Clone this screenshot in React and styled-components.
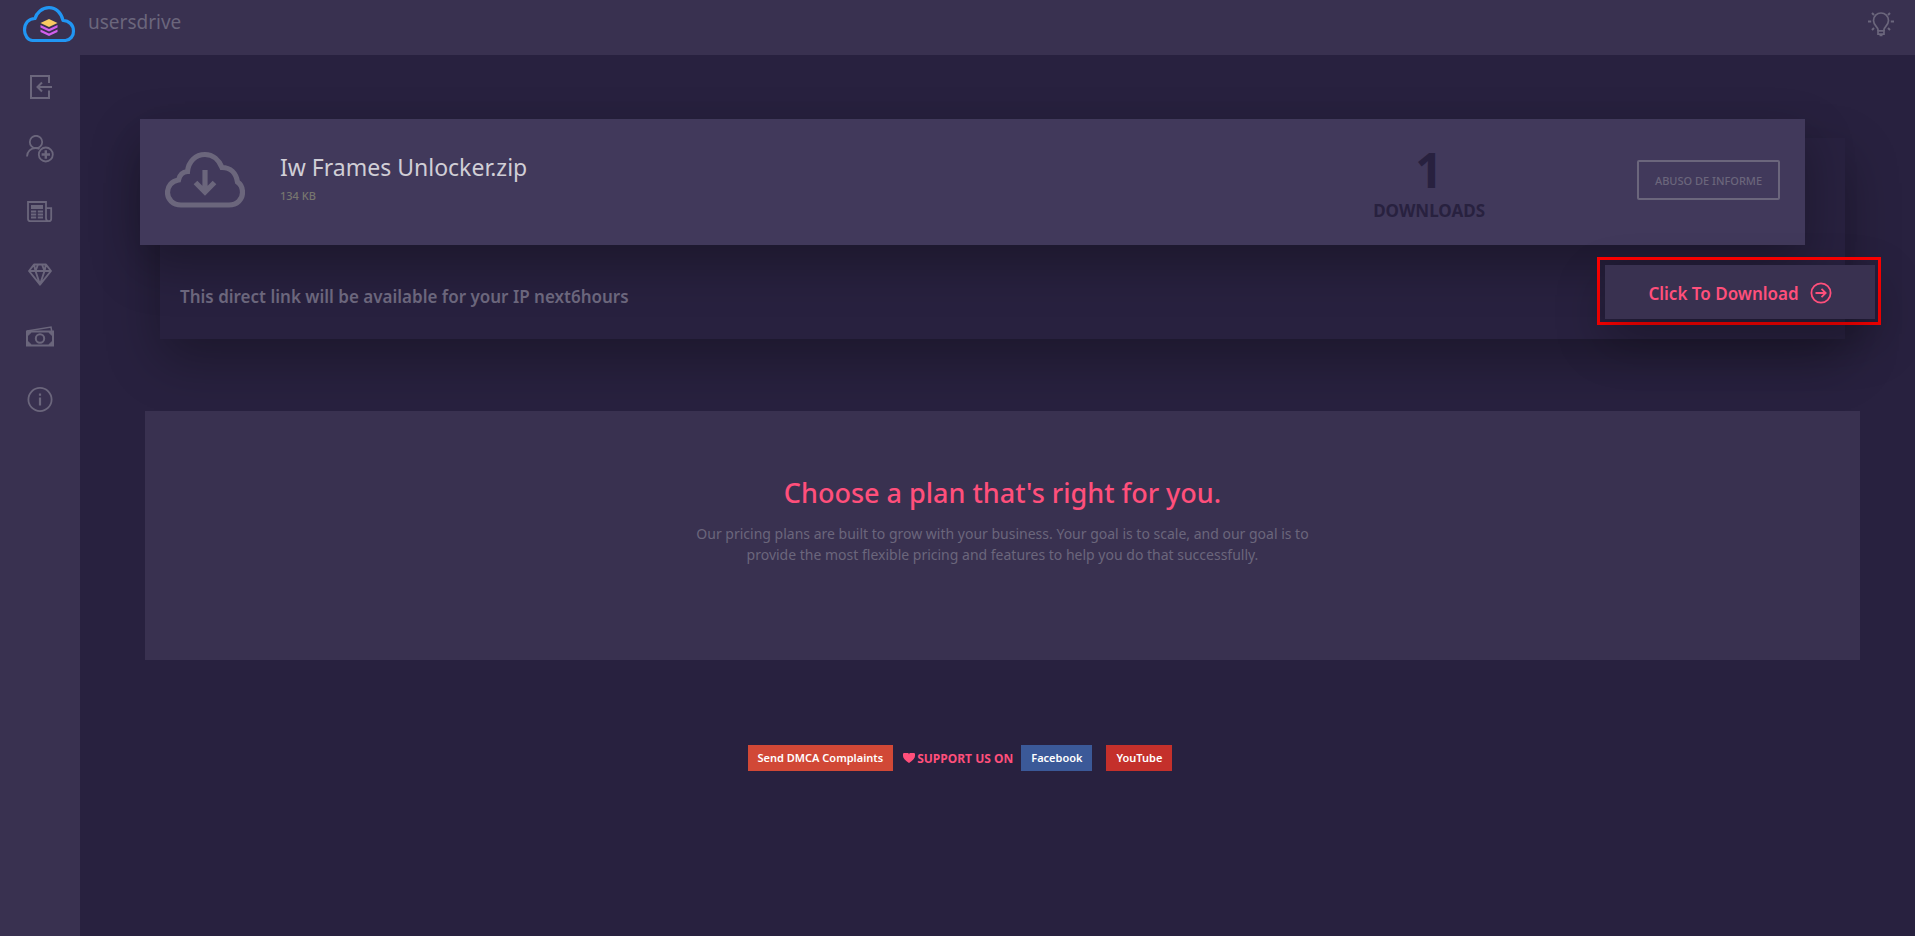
import styled, { createGlobalStyle } from "styled-components";

const menu = [
  { id: "login", label: "Login", Icon: LoginIcon },
  { id: "signup", label: "Sign up", Icon: SignUpIcon },
  { id: "news", label: "News", Icon: NewsIcon },
  { id: "premium", label: "Premium", Icon: DiamondIcon },
  { id: "money", label: "Make money", Icon: MoneyIcon },
  { id: "info", label: "Info", Icon: InfoIcon },
];

export default function App() {
  return (
    <>
      <GlobalStyle />
      <Header>
        <Brand href="#">
          <LogoIcon />
          <span>usersdrive</span>
        </Brand>
        <ThemeButton aria-label="Switch theme">
          <BulbIcon />
        </ThemeButton>
      </Header>
      <Page>
        <Sidebar>
          {menu.map(({ id, label, Icon }) => (
            <SideLink key={id} href={`#${id}`} aria-label={label}>
              <Icon />
            </SideLink>
          ))}
        </Sidebar>
        <Main>
          <DownloadBox>
            <FileCard>
              <CloudIcon />
              <FileInfo>
                <FileName>Iw Frames Unlocker.zip</FileName>
                <FileSize>134 KB</FileSize>
              </FileInfo>
              <Counter>
                <Count>1</Count>
                <CountLabel>DOWNLOADS</CountLabel>
              </Counter>
              <ReportButton>ABUSO DE INFORME</ReportButton>
            </FileCard>
            <LinkRow>
              <LinkNote>
                This direct link will be available for your IP next6hours
              </LinkNote>
              <Highlight>
                <DownloadButton>
                  Click To Download
                  <ArrowIcon />
                </DownloadButton>
              </Highlight>
            </LinkRow>
          </DownloadBox>
          <Plans>
            <PlansTitle>Choose a plan that's right for you.</PlansTitle>
            <PlansText>
              Our pricing plans are built to grow with your business. Your goal
              is to scale, and our goal is to
              <br />
              provide the most flexible pricing and features to help you do that
              successfully.
            </PlansText>
          </Plans>
          <Footer>
            <Badge href="#dmca" $color="#d14836">
              Send DMCA Complaints
            </Badge>
            <Support>
              <HeartIcon />
              SUPPORT US ON
            </Support>
            <Badge href="#facebook" $color="#3b5998">
              Facebook
            </Badge>
            <Badge href="#youtube" $color="#c4302b" $spaced>
              YouTube
            </Badge>
          </Footer>
        </Main>
      </Page>
    </>
  );
}

function LogoIcon() {
  return (
    <svg width="54" height="38" viewBox="0 0 54 38" fill="none">
      <path
        d="M10.500 35.500h33a9 9 0 0 0 8-9.500c0-6-4.500-10.500-10.500-10.500C39.500 8 34 2.700 27 2.700S14.500 8 13 13.500C6.500 13.500 2.500 18.500 2.500 25c0 5.500 3.500 10.500 8 10.500z"
        stroke="#2196f3"
        strokeWidth="3.2"
        strokeLinejoin="round"
      />
      <path d="M27 14l8.500 4L27 22l-8.500-4z" fill="#f9cb62" />
      <path
        d="M18.500 20l8.500 4 8.500-4v2.500l-8.500 4-8.500-4zM18.500 24.500l8.500 4 8.500-4v2.400l-8.500 4-8.500-4z"
        fill="#d15fee"
      />
    </svg>
  );
}

function BulbIcon() {
  return (
    <svg width="28" height="28" viewBox="0 0 28 28" fill="none" stroke="currentColor" strokeWidth="1.700">
      <path d="M11 20v-1.500c0-2.500-4.500-4-4.500-9a7.500 7.500 0 0 1 15 0c0 5-4.500 6.500-4.500 9V20" />
      <path d="M11 19.800h6v3.400h-6zM12.500 24.300h3" />
      <path d="M1 10.500h3.200M23.800 10.500H27M5 2l2 2M23 2l-2 2M5 19l2-2M23 19l-2-2" strokeWidth="2" />
    </svg>
  );
}

function LoginIcon() {
  return (
    <svg width="28" height="28" viewBox="0 0 28 28" fill="none" stroke="currentColor" strokeWidth="2">
      <path d="M23 11V4H5v22h18v-7.500" />
      <path d="M26 15H12M16 10.500L11.500 15l4.500 4.500" />
    </svg>
  );
}

function SignUpIcon() {
  return (
    <svg width="28" height="28" viewBox="0 0 28 28" fill="none" stroke="currentColor" strokeWidth="1.800">
      <circle cx="10" cy="7" r="6.200" />
      <path d="M1 21.500c0-5 4-8.500 8.500-8.500 1.800 0 2.800.3 4 1" />
      <circle cx="19.800" cy="19.500" r="7" />
      <path d="M19.800 15.300v8.400M15.600 19.500H24" strokeWidth="2.400" />
    </svg>
  );
}

function NewsIcon() {
  return (
    <svg width="28" height="28" viewBox="0 0 28 28" fill="none" stroke="currentColor" strokeWidth="1.800">
      <path d="M2 4h18v16c0 2.200 1 3.200 2.700 3.200H4.500c-1.700 0-2.500-.9-2.500-2.500zM20 10.200h5.200v10.500c0 1.700-.9 2.500-2.500 2.500" />
      <path d="M5 9h12" strokeWidth="4" />
      <path d="M5 13.500h5.200M5 16.500h5.200M5 19.500h5.200M11.800 13.500H17M11.800 16.500H17M11.800 19.500H17" strokeWidth="1.900" />
    </svg>
  );
}

function DiamondIcon() {
  return (
    <svg width="28" height="28" viewBox="0 0 28 28" fill="none" stroke="currentColor" strokeWidth="1.900" strokeLinejoin="round">
      <path d="M8 3.500h12l5 6.500L14 23.700 3 10zM3 10h22M14 23.500L9.500 10 12 3.500M14 23.500L18.500 10 16 3.500M8 3.500L9.500 10M20 3.500L18.500 10" />
    </svg>
  );
}

function MoneyIcon() {
  return (
    <svg width="28" height="28" viewBox="0 0 28 28" fill="none" stroke="currentColor" strokeWidth="2">
      <path d="M1 7.500h26v14H1z" />
      <circle cx="14" cy="14.500" r="4.200" />
      <path d="M1 7L25 3l.7 4" strokeWidth="1.500" />
      <path d="M2 8.500h3L2 11.500zM26 8.500h-3l3 3zM2 20.500h3l-3-3zM26 20.500h-3l3-3z" fill="currentColor" strokeWidth="1" />
    </svg>
  );
}

function InfoIcon() {
  return (
    <svg width="28" height="28" viewBox="0 0 28 28" fill="none" stroke="currentColor" strokeWidth="1.800">
      <circle cx="14" cy="12.500" r="11.600" />
      <path d="M14 10.500v8M14 6.500v2.200" strokeWidth="2.200" />
    </svg>
  );
}

function CloudIcon() {
  return (
    <svg width="80" height="58" viewBox="0 0 80 58" fill="none" stroke="currentColor" strokeWidth="5.200">
      <path d="M16 54h48c8 0 13.500-5.500 13.500-12.500 0-4.500-2-8.500-5-10.500C71 22 65.500 16.500 57 16.500 54 9 48 3.500 40 3.500c-9.500 0-16.500 7-17.500 17-5.500.5-8 4-9 8.500C6.500 30 2.500 35.500 2.500 41.500 2.500 48.500 8 54 16 54z" />
      <path d="M40 19v23M30.500 31.500l9.500 9.500 9.500-9.500" />
    </svg>
  );
}

function ArrowIcon() {
  return (
    <svg width="22" height="22" viewBox="0 0 22 22" fill="none" stroke="currentColor" strokeWidth="1.800">
      <circle cx="11" cy="11" r="9.600" />
      <path d="M5.500 11h10M11.500 6.800l4.200 4.200-4.200 4.200" />
    </svg>
  );
}

function HeartIcon() {
  return (
    <svg width="12" height="10" viewBox="0 0 12 10" fill="currentColor">
      <path d="M6 10C2.500 7.500 0 5.500 0 3a3 3 0 0 1 6-1.500A3 3 0 0 1 12 3c0 2.500-2.500 4.500-6 7z" />
    </svg>
  );
}

const GlobalStyle = createGlobalStyle`
  * {
    box-sizing: border-box;
  }

  body {
    margin: 0;
    background: #28213f;
    color: #6b667c;
    font-family: "Noto Sans", sans-serif;
  }

  a {
    text-decoration: none;
  }

  button {
    font-family: inherit;
    cursor: pointer;
  }
`;

const Header = styled.header`
  display: flex;
  justify-content: space-between;
  align-items: flex-start;
  height: 55px;
  padding: 5px 20px 0 22px;
  background: #393150;
`;

const Brand = styled.a`
  display: flex;
  gap: 12px;
  color: #6b667c;
  font-size: 19px;
  line-height: 34px;
`;

const ThemeButton = styled.button`
  display: flex;
  margin-top: 6px;
  padding: 0;
  border: none;
  background: none;
  color: #6b667c;
`;

const Page = styled.div`
  display: flex;
  min-height: calc(100vh - 55px);
`;

const Sidebar = styled.nav`
  display: flex;
  flex-direction: column;
  flex: none;
  gap: 2px;
  width: 80px;
  background: #393150;
`;

const SideLink = styled.a`
  display: flex;
  align-items: center;
  justify-content: center;
  height: 61px;
  color: #6b667c;
`;

const Main = styled.main`
  display: flex;
  flex-direction: column;
  flex: 1;
  min-width: 0;
`;

const DownloadBox = styled.section`
  display: flex;
  flex-direction: column;
  margin: 83px 70px 0 80px;
  background: #28213f;
  box-shadow: 0 20px 50px rgba(0, 0, 0, 0.3);
`;

const FileCard = styled.div`
  display: flex;
  align-items: center;
  height: 126px;
  margin: -19px 40px 0 -20px;
  padding: 0 25px 4px;
  background: #41395b;
  box-shadow: 0 20px 50px rgba(0, 0, 0, 0.3);
`;

const FileInfo = styled.div`
  flex: 1;
  padding-left: 35px;
`;

const FileName = styled.h1`
  margin: 0;
  color: #d0ced6;
  font-size: 23px;
  font-weight: 400;
  line-height: 32px;
`;

const FileSize = styled.p`
  margin: 0;
  color: #77766f;
  font-size: 11px;
  font-weight: 500;
  line-height: 26px;
`;

const Counter = styled.div`
  margin-right: 152px;
  padding-top: 12px;
  color: #28213f;
  font-weight: 700;
  text-align: center;
`;

const Count = styled.div`
  font-size: 48px;
  line-height: 50px;
`;

const CountLabel = styled.div`
  font-size: 17px;
  line-height: 32px;
`;

const ReportButton = styled.button`
  width: 143px;
  height: 40px;
  padding: 0;
  border: 2px solid #6b667c;
  border-radius: 2px;
  background: none;
  color: #6b667c;
  font-size: 11px;
  font-weight: 500;
`;

const LinkRow = styled.div`
  display: flex;
  align-items: flex-start;
  justify-content: space-between;
  height: 94px;
  padding: 12px 0 0 20px;
`;

const LinkNote = styled.p`
  margin: 24px 0 0;
  font-size: 17px;
  font-weight: 600;
  line-height: 32px;
`;

const Highlight = styled.div`
  margin-right: -36px;
  padding: 5px 3px 3px 5px;
  border: 3px solid #ff0000;
`;

const DownloadButton = styled.button`
  display: flex;
  align-items: center;
  justify-content: center;
  gap: 11px;
  width: 270px;
  height: 54px;
  padding: 2px 0 0;
  border: none;
  background: #393150;
  box-shadow: 0 20px 50px rgba(0, 0, 0, 0.3);
  color: #ff4f7b;
  font-size: 17px;
  font-weight: 600;
`;

const Plans = styled.section`
  height: 249px;
  margin: 72px 55px 0 65px;
  padding-top: 64px;
  background: #393150;
  text-align: center;
`;

const PlansTitle = styled.h2`
  margin: 0 0 12px;
  color: #ff4f7b;
  font-size: 27px;
  font-weight: 500;
  line-height: 36px;
`;

const PlansText = styled.p`
  margin: 0;
  font-size: 14px;
  line-height: 21px;
`;

const Footer = styled.footer`
  display: flex;
  align-items: center;
  justify-content: center;
  margin-top: 85px;
  padding-right: 75px;
`;

const Badge = styled.a`
  margin-left: ${(props) => (props.$spaced ? 14 : 0)}px;
  padding: 0 10px;
  background: ${(props) => props.$color};
  color: white;
  font-size: 11px;
  font-weight: 600;
  line-height: 26px;
`;

const Support = styled.span`
  display: flex;
  align-items: center;
  gap: 2px;
  margin: 0 8px 0 10px;
  color: #ff4f7b;
  font-size: 12px;
  font-weight: 700;
`;
